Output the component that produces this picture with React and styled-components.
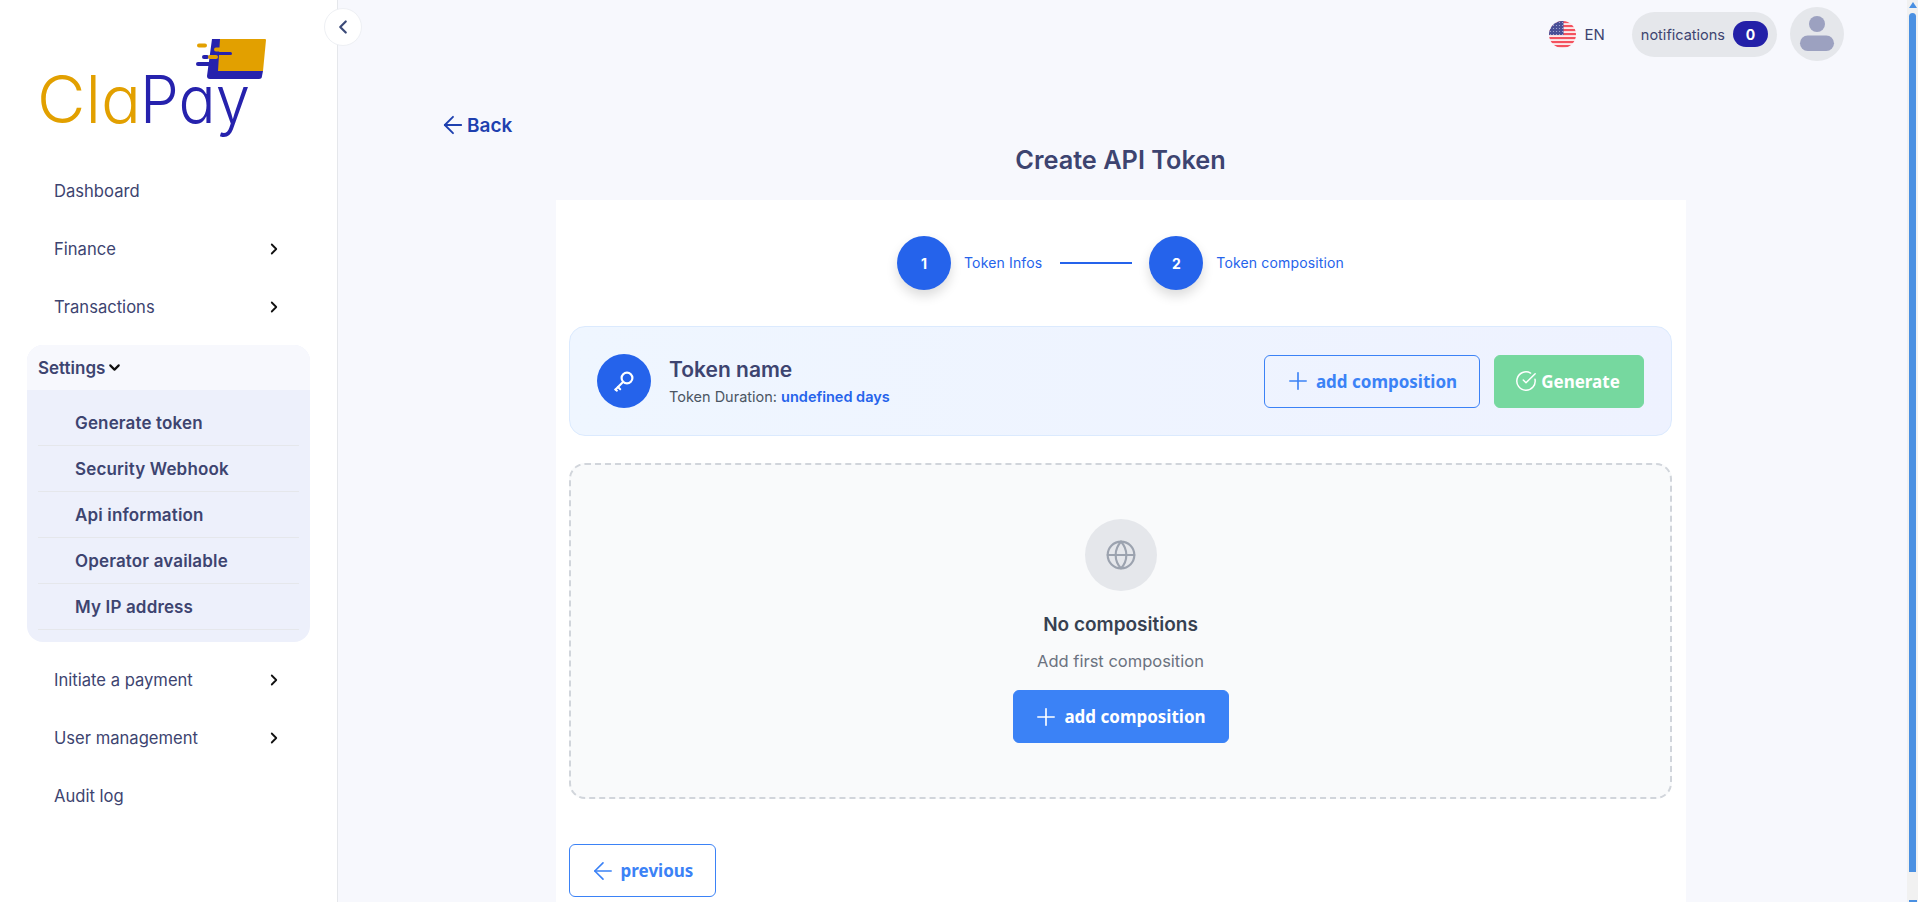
import React from "react";
import styled, { createGlobalStyle } from "styled-components";
import { ArrowLeft, ChevronDown, ChevronLeft, ChevronRight, CircleCheckBig, Globe, Plus } from "lucide-react";

const GlobalStyle = createGlobalStyle`
  html, body {
    margin: 0;
    padding: 0;
    height: 100%;
    overflow: hidden;
    background: #f7f8fd;
    font-family: "Inter", "Liberation Sans", sans-serif;
  }
  * { box-sizing: border-box; }
`;

const NAV_TOP = [
  { label: "Dashboard" },
  { label: "Finance", arrow: true },
  { label: "Transactions", arrow: true },
];
const NAV_BOTTOM = [
  { label: "Initiate a payment", arrow: true },
  { label: "User management", arrow: true },
  { label: "Audit log" },
];
const SUB_ITEMS = ["Generate token", "Security Webhook", "Api information", "Operator available", "My IP address"];

function Logo() {
  return (
    <LogoSvg viewBox="0 0 250 100" width="250" height="100">
      {/* carte */}
      <path d="M190 0H200V32H241L240 37a3 3 0 0 1-3 3H188a3 3 0 0 1-3-3z" fill="#2622ad" />
      <path d="M198 0H243a1 1 0 0 1 1 1L241 32H196z" fill="#e2a000" />
      <rect x="175" y="4.5" width="10" height="4" rx="2" fill="#e2a000" />
      <rect x="192" y="8.5" width="8" height="4" rx="2" fill="#e2a000" />
      <rect x="191" y="13" width="19" height="3" rx="1.5" fill="#2622ad" />
      <rect x="180" y="16" width="7" height="4" rx="2" fill="#2622ad" />
      <rect x="186" y="16" width="10" height="4" rx="2" fill="#e2a000" />
      <rect x="174" y="23" width="17" height="4" rx="2" fill="#2622ad" />
      <LogoText x="15" y="84" fill="#e2a000" textLength="104" lengthAdjust="spacingAndGlyphs">Cla</LogoText>
      <LogoText x="118" y="84" fill="#2622ad" textLength="110" lengthAdjust="spacingAndGlyphs">Pay</LogoText>
    </LogoSvg>
  );
}

function Flag() {
  return (
    <svg width="27" height="27" viewBox="0 0 27 27">
      <defs>
        <clipPath id="flagClip"><circle cx="13.5" cy="13.5" r="13.5" /></clipPath>
        <pattern id="stars" width="3" height="3" patternUnits="userSpaceOnUse">
          <rect width="3" height="3" fill="#4a4f96" />
          <circle cx="1.5" cy="1.5" r="0.6" fill="#aeb2d8" />
        </pattern>
      </defs>
      <g clipPath="url(#flagClip)">
        <rect width="27" height="27" fill="#fbe9ea" />
        {[0, 4, 8, 12, 16, 20, 24].map((y) => (
          <rect key={y} y={y} width="27" height="2.1" fill="#f4525f" />
        ))}
        <rect width="14.5" height="14" fill="url(#stars)" />
      </g>
    </svg>
  );
}

function Avatar() {
  return (
    <svg width="36" height="36" viewBox="0 0 36 36">
      <circle cx="18" cy="8" r="8" fill="#9ca1c0" />
      <rect x="1" y="19.5" width="34" height="15.5" rx="7.7" fill="#9ca1c0" />
    </svg>
  );
}

function KeyIcon() {
  return (
    <svg width="22" height="22" viewBox="0 0 22 22" fill="none" stroke="#fff" strokeLinecap="round">
      <circle cx="14" cy="8" r="5.4" strokeWidth="2.2" />
      <path d="M10 12L2.5 19.5" strokeWidth="2.2" />
      <path d="M5 17l2.2 2.2M2.5 19.5l1.4 1.2" strokeWidth="2" />
    </svg>
  );
}

function NavRow({ label, arrow }) {
  return (
    <NavItem>
      <span>{label}</span>
      {arrow && <ChevronRight size={18} strokeWidth={2.4} color="#111" />}
    </NavItem>
  );
}

function App() {
  return (
    <Page>
      <GlobalStyle />
      <Sidebar>
        <Logo />
        <Nav>
          {NAV_TOP.map((n) => <NavRow key={n.label} {...n} />)}
          <SettingsGroup>
            <SettingsHead>
              Settings
              <ChevronDown size={17} strokeWidth={3} color="#111" />
            </SettingsHead>
            <SubList>
              {SUB_ITEMS.map((s) => <SubItem key={s}>{s}</SubItem>)}
            </SubList>
          </SettingsGroup>
          {NAV_BOTTOM.map((n) => <NavRow key={n.label} {...n} />)}
        </Nav>
        <CollapseButton>
          <ChevronLeft size={22} strokeWidth={2.4} color="#3b4a78" />
        </CollapseButton>
      </Sidebar>

      <Main>
        <TopBar>
          <Lang>
            <Flag />
            <span>EN</span>
          </Lang>
          <NotifPill>
            notifications
            <NotifBadge>0</NotifBadge>
          </NotifPill>
          <AvatarCircle><Avatar /></AvatarCircle>
        </TopBar>

        <Content>
          <BackLink>
            <ArrowLeft size={28} strokeWidth={1.6} />
            Back
          </BackLink>
          <Title>Create API Token</Title>
          <Card>
            <Stepper>
              <StepCircle>1</StepCircle>
              <StepLabel>Token Infos</StepLabel>
              <StepLine />
              <StepCircle>2</StepCircle>
              <StepLabel>Token composition</StepLabel>
            </Stepper>

            <TokenBar>
              <KeyCircle>
                <KeyIcon />
              </KeyCircle>
              <TokenText>
                <TokenName>Token name</TokenName>
                <TokenDuration>Token Duration: <strong>undefined days</strong></TokenDuration>
              </TokenText>
              <TokenActions>
                <Button $variant="outline" $width={216}>
                  <Plus size={28} strokeWidth={1.4} />
                  add composition
                </Button>
                <Button $variant="green" $width={150}>
                  <CircleCheckBig size={22} strokeWidth={1.6} />
                  Generate
                </Button>
              </TokenActions>
            </TokenBar>

            <EmptyBox>
              <GlobeCircle>
                <Globe size={32} strokeWidth={1.6} color="#9ca3af" />
              </GlobeCircle>
              <EmptyTitle>No compositions</EmptyTitle>
              <EmptySub>Add first composition</EmptySub>
              <Button $variant="solid" $width={216}>
                <Plus size={28} strokeWidth={1.4} />
                add composition
              </Button>
            </EmptyBox>

            <Footer>
              <Button $variant="white" $width={147}>
                <ArrowLeft size={28} strokeWidth={1.4} />
                previous
              </Button>
            </Footer>
          </Card>
        </Content>
      </Main>

      <ScrollTrack>
        <ScrollArrow />
        <ScrollThumb />
        <ScrollArrowEnd />
      </ScrollTrack>
    </Page>
  );
}

const Page = styled.div`
  display: flex;
  width: 100%;
  height: 902px;
  overflow: hidden;
  background: #f7f8fd;
`;

const Sidebar = styled.aside`
  position: relative;
  flex: 0 0 338px;
  height: 100%;
  background: #fff;
  border-right: 1px solid #e5e7eb;
  padding-top: 39px;
`;

const LogoSvg = styled.svg`
  display: block;
  margin-left: 22px;
`;

const LogoText = styled.text`
  font-family: "Inter", sans-serif;
  font-feature-settings: "cv11";
  font-weight: 300;
  font-size: 66px;
`;

const Nav = styled.nav`
  display: flex;
  flex-direction: column;
  margin-top: 23px;
  padding: 0 27px;
`;

const NavItem = styled.div`
  display: flex;
  align-items: center;
  justify-content: space-between;
  height: 58px;
  padding: 0 27px;
  color: #3d4470;
  font-size: 16.6px;
`;

const SettingsGroup = styled.div`
  margin: 9px 0 9px;
  border-radius: 16px;
  overflow: hidden;
  background: #edf0fb;
`;

const SettingsHead = styled.div`
  display: flex;
  align-items: center;
  height: 45px;
  padding-left: 11px;
  gap: 1px;
  background: #f7f8fd;
  color: #3d4470;
  font-size: 17px;
  font-weight: 600;
`;

const SubList = styled.div`
  padding: 10px 11px 12px;
`;

const SubItem = styled.div`
  display: flex;
  align-items: center;
  height: 46px;
  padding-left: 37px;
  border-bottom: 1px solid #e5e7eb;
  color: #3d4470;
  font-size: 17px;
  font-weight: 600;
  letter-spacing: 0.15px;
`;

const CollapseButton = styled.div`
  position: absolute;
  top: 8px;
  right: -25px;
  display: flex;
  align-items: center;
  justify-content: center;
  width: 38px;
  height: 38px;
  border-radius: 50%;
  background: #fff;
  border: 1px solid #eef0f4;
`;

const Main = styled.main`
  flex: 1;
  min-width: 0;
  display: flex;
  flex-direction: column;
`;

const TopBar = styled.header`
  flex-shrink: 0;
  display: flex;
  align-items: center;
  justify-content: flex-end;
  height: 68px;
  padding-right: 63px;
`;

const Lang = styled.div`
  display: flex;
  align-items: center;
  gap: 9px;
  margin-right: 27px;
  color: #3d4470;
  font-size: 15px;
`;

const NotifPill = styled.div`
  display: flex;
  align-items: center;
  gap: 8px;
  height: 45px;
  padding: 0 9px;
  border-radius: 23px;
  background: #e5e7eb;
  color: #3d4470;
  font-size: 14.5px;
`;

const NotifBadge = styled.span`
  display: flex;
  align-items: center;
  justify-content: center;
  width: 35px;
  height: 26px;
  border-radius: 13px;
  background: #2320a8;
  color: #fff;
  font-size: 14px;
  font-weight: 700;
`;

const AvatarCircle = styled.div`
  display: flex;
  align-items: center;
  justify-content: center;
  width: 54px;
  height: 54px;
  margin-left: 13px;
  border-radius: 50%;
  background: #e5e7eb;
`;

const Content = styled.div`
  display: flex;
  flex-direction: column;
  padding-left: 105px;
`;

const BackLink = styled.div`
  display: flex;
  align-items: center;
  height: 28px;
  margin: 43px 0 0 -4px;
  color: #1e40af;
  font-size: 19px;
  font-weight: 600;
`;

const Title = styled.h1`
  width: 1131px;
  margin: 5px 0 0 112px;
  text-align: center;
  color: #3d4470;
  font-size: 25.3px;
  font-weight: 600;
  line-height: 32px;
`;

const Card = styled.section`
  width: 1130px;
  margin: 24px 0 0 113px;
  padding: 36px 14px 40px 13px;
  background: #fff;
`;

const Stepper = styled.div`
  display: flex;
  align-items: center;
  justify-content: center;
  height: 54px;
  margin-bottom: 36px;
`;

const StepCircle = styled.div`
  display: flex;
  align-items: center;
  justify-content: center;
  width: 54px;
  height: 54px;
  border-radius: 50%;
  background: #2563eb;
  box-shadow: 0 6px 12px rgba(0, 0, 0, 0.14);
  color: #fff;
  font-size: 14px;
  font-weight: 700;
`;

const StepLabel = styled.span`
  margin-left: 13px;
  padding-bottom: 2px;
  color: #2563eb;
  font-size: 14px;
  letter-spacing: 0.15px;
`;

const StepLine = styled.div`
  width: 72px;
  height: 2px;
  margin: 0 17px 0 18px;
  background: #2563eb;
`;

const TokenBar = styled.div`
  display: flex;
  align-items: center;
  height: 110px;
  padding: 0 27px;
  border: 1px solid #dbeafe;
  border-radius: 16px;
  background: linear-gradient(90deg, #eff6ff, #eef2ff);
`;

const KeyCircle = styled.div`
  display: flex;
  align-items: center;
  justify-content: center;
  width: 54px;
  height: 54px;
  border-radius: 50%;
  background: #2563eb;
`;

const TokenText = styled.div`
  flex: 1;
  margin-left: 18px;
`;

const TokenName = styled.div`
  margin-top: 1px;
  color: #3d4470;
  font-size: 21px;
  font-weight: 600;
  line-height: 28px;
`;

const TokenDuration = styled.div`
  margin-top: 2px;
  color: #4b5563;
  font-size: 14.5px;
  line-height: 22px;

  strong {
    color: #2563eb;
    font-weight: 600;
  }
`;

const TokenActions = styled.div`
  display: flex;
  gap: 14px;
`;

const BUTTON_SKINS = {
  outline: "background: transparent; color: #3b82f6; border: 1px solid #3b82f6;",
  white: "background: #fff; color: #3b82f6; border: 1px solid #3b82f6;",
  green: "background: #76d89f; color: #fff; border: 1px solid #76d89f;",
  solid: "background: #3b82f6; color: #fff; border: 1px solid #3b82f6;",
};

const Button = styled.button`
  display: flex;
  align-items: center;
  justify-content: center;
  gap: 4px;
  width: ${(p) => p.$width}px;
  height: 53px;
  padding: 0 3px 0 0;
  border-radius: 6px;
  font-family: "Noto Sans", sans-serif;
  font-size: 17px;
  font-weight: 700;
  ${(p) => BUTTON_SKINS[p.$variant]}
`;

const EmptyBox = styled.div`
  display: flex;
  flex-direction: column;
  align-items: center;
  height: 336px;
  margin-top: 27px;
  padding-top: 54px;
  border: 2px dashed #d1d5db;
  border-radius: 16px;
  background: #f9fafb;
`;

const GlobeCircle = styled.div`
  display: flex;
  align-items: center;
  justify-content: center;
  width: 72px;
  height: 72px;
  border-radius: 50%;
  background: #e5e7eb;
`;

const EmptyTitle = styled.div`
  margin-top: 20px;
  color: #374151;
  font-size: 19px;
  font-weight: 600;
  line-height: 28px;
`;

const EmptySub = styled.div`
  margin: 10px 0 17px;
  color: #6b7280;
  font-size: 16.5px;
  line-height: 24px;
`;

const Footer = styled.div`
  display: flex;
  margin-top: 45px;
`;

const ScrollTrack = styled.div`
  flex: 0 0 11px;
  display: flex;
  flex-direction: column;
  align-items: center;
  height: 100%;
  background: #f1f1f1;
  padding-top: 2px;
`;

const ScrollArrow = styled.div`
  width: 0;
  height: 0;
  border-left: 4px solid transparent;
  border-right: 4px solid transparent;
  border-bottom: 6px solid #4a90e2;
`;

const ScrollThumb = styled.div`
  width: 7px;
  height: 859px;
  margin-top: 5px;
  border-radius: 4px 4px 0 0;
  background: #4a90e2;
`;

const ScrollArrowEnd = styled.div`
  width: 8px;
  height: 2px;
  margin-top: 28px;
  background: #4a90e2;
`;

export default App;
